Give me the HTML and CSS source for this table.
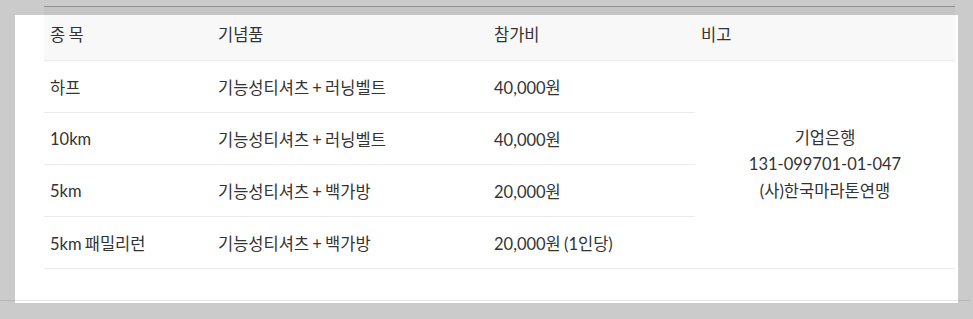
FILE: index.html
```html
<!DOCTYPE html>
<html lang="ko">
<head>
<meta charset="utf-8">
<title>참가비 안내</title>
<link rel="stylesheet" href="styles.css">
</head>
<body>
<div class="page">
  <table class="fee-table">
    <colgroup>
      <col class="c1"><col class="c2"><col class="c3"><col class="c4">
    </colgroup>
    <thead>
      <tr><th>종 목</th><th>기념품</th><th>참가비</th><th>비고</th></tr>
    </thead>
    <tbody>
      <tr><td>하프</td><td>기능성티셔츠 + 러닝벨트</td><td>40,000원</td>
        <td class="note" rowspan="4">기업은행<br>131-099701-01-047<br>(사)한국마라톤연맹</td></tr>
      <tr><td>10km</td><td>기능성티셔츠 + 러닝벨트</td><td>40,000원</td></tr>
      <tr><td>5km</td><td>기능성티셔츠 + 백가방</td><td>20,000원</td></tr>
      <tr><td>5km 패밀리런</td><td>기능성티셔츠 + 백가방</td><td>20,000원 (1인당)</td></tr>
    </tbody>
  </table>
</div>
<div class="footer-line"></div>
<div class="spotlight"></div>
</body>
</html>
```
FILE: styles.css
```css
html, body {
  margin: 0;
  background: #ffffff;
  overflow: hidden;
}
body {
  font-family: Lato, "Noto Sans CJK KR", sans-serif;
  font-size: 16.5px;
  color: #333333;
  letter-spacing: 0;
  word-spacing: -1px;
  height: 319px;
}
.page {
  padding: 6px 0 0 44px;
}
.fee-table {
  width: 911px;
  border-collapse: collapse;
  table-layout: fixed;
  border-top: 1px solid #b8b8b8;
}
.c1 { width: 168px; }
.c2 { width: 276px; }
.c3 { width: 207px; }
.c4 { width: 260px; }
.fee-table th {
  height: 53px;
  padding: 0 6px;
  background: #f8f8f8;
  text-align: left;
  font-weight: normal;
  border-bottom: 1px solid #ececec;
}
.fee-table td {
  height: 51px;
  padding: 0 6px;
  border-bottom: 1px solid #ececec;
}
.fee-table td.note {
  text-align: center;
  line-height: 26.5px;
}
.footer-line {
  margin-top: 31px;
  width: 970px;
  border-top: 1px solid #e6e6e6;
}
.spotlight {
  position: absolute;
  left: 15px;
  top: 15px;
  width: 943px;
  height: 288px;
  box-shadow: 0 0 0 1200px rgba(0, 0, 0, 0.205);
  pointer-events: none;
}
```
